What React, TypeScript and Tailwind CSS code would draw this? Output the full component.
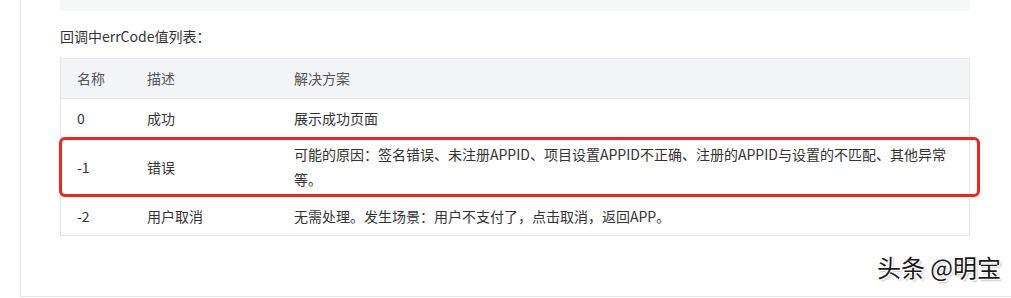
import React from 'react';

const rows = [
  { code: '0', desc: '成功', fix: ['展示成功页面'] },
  {
    code: '-1',
    desc: '错误',
    fix: ['可能的原因：签名错误、未注册APPID、项目设置APPID不正确、注册的APPID与设置的不匹配、其他异常', '等。'],
  },
  { code: '-2', desc: '用户取消', fix: ['无需处理。发生场景：用户不支付了，点击取消，返回APP。'] },
];

const font = { fontFamily: '"Microsoft YaHei", "Noto Sans CJK SC", "Noto Sans", sans-serif' };

export default function App() {
  return (
    <div className="w-[1011px] h-[298px] bg-white overflow-hidden" style={font}>
      <div className="relative ml-[20px] h-[297px] border-l border-b border-[#e6e6e6] pl-[39px] pr-[41px]">
        <div className="h-[11px] bg-[#f6f7f8]" />
        <p className="mt-[14px] text-[14px] leading-[22px] text-[#333]">回调中errCode值列表：</p>

        <div className="mt-[11px] border border-[#e4e6ea] text-[14px] text-[#333]">
          <div className="flex h-[39px] items-center bg-[#f3f4f6] text-[#555]">
            <div className="w-[70px] pl-[16px]">名称</div>
            <div className="w-[147px] pl-[16px]">描述</div>
            <div className="flex-1 pl-[16px]">解决方案</div>
          </div>
          {rows.map(r => (
            <div
              key={r.code}
              className={`flex items-center border-t border-[#e4e6ea] ${r.fix.length > 1 ? 'h-[59px]' : 'h-[39px]'}`}
            >
              <div className="w-[70px] pl-[16px]">{r.code}</div>
              <div className="w-[147px] pl-[16px]">{r.desc}</div>
              <div className="flex-1 pl-[16px] leading-[25px] whitespace-nowrap">
                {r.fix.map((line, i) => (
                  <div key={i}>{line}</div>
                ))}
              </div>
            </div>
          ))}
        </div>

        {/* red annotation box drawn over the -1 row */}
        <div className="absolute left-[38px] top-[137px] w-[921px] h-[60px] rounded-[6px] border-[3px] border-[#f2241c] pointer-events-none" />

        <div
          className="absolute right-[10px] top-[252px] text-[24px] leading-[30px] text-[#1a1a1a]"
          style={{ textShadow: '1px 1px 0 #fff, -1px -1px 0 #fff, 1px -1px 0 #fff, -1px 1px 0 #fff, 2px 2px 2px rgba(0,0,0,0.25)' }}
        >
          头条 @明宝
        </div>
      </div>
    </div>
  );
}
